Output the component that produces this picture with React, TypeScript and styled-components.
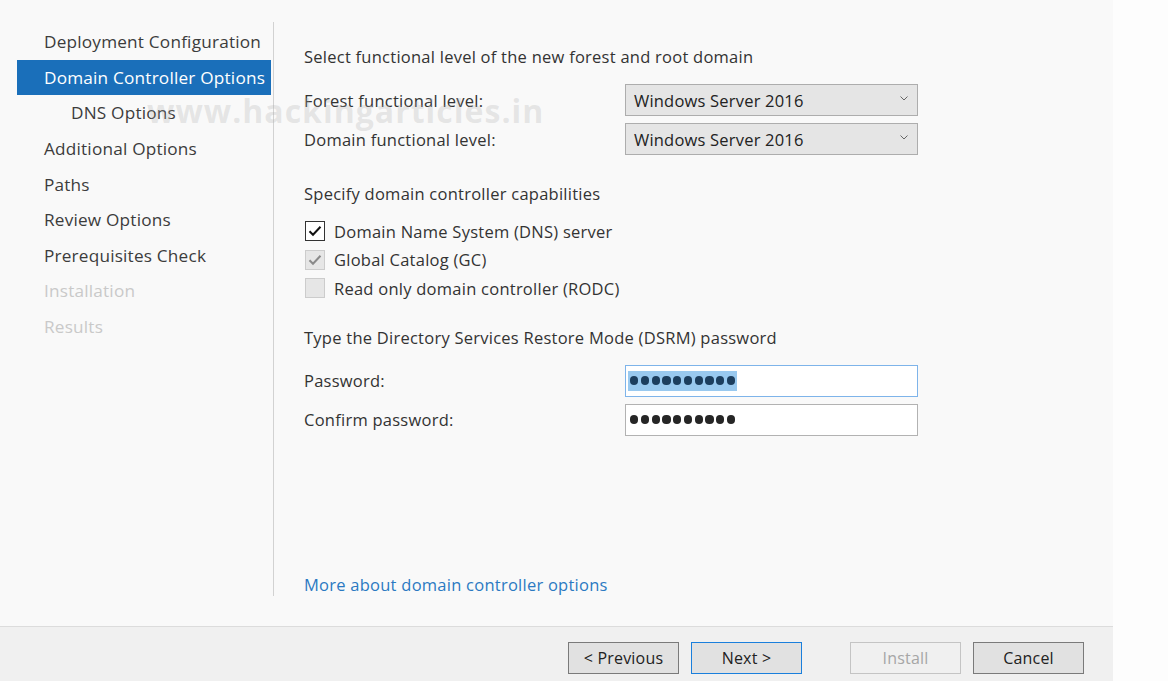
import React from "react";
import styled, { createGlobalStyle } from "styled-components";

const Global = createGlobalStyle`
  html, body { margin: 0; padding: 0; background: #fdfdfd; }
  body { font-family: "Open Sans", "Noto Sans", "Liberation Sans", sans-serif; }
  * { box-sizing: border-box; }
`;

const Page = styled.div`
  position: relative;
  display: flex;
  width: 1168px;
  height: 681px;
  overflow: hidden;
  background: #fdfdfd;
`;

const Window = styled.div`
  width: 1113px;
  height: 681px;
  display: flex;
  flex-direction: column;
  background: #f9f9f9;
`;

const Body = styled.div`
  flex: 1;
  display: flex;
  min-height: 0;
`;

const Sidebar = styled.nav`
  width: 274px;
  margin-top: 22px;
  height: 574px;
  padding-top: 2px;
  border-right: 1px solid #d2d2d2;
  display: flex;
  flex-direction: column;
`;

const NavItem = styled.div<{ $selected?: boolean; $disabled?: boolean; $indent?: boolean }>`
  height: 35.6px;
  margin-left: 17px;
  margin-right: 2px;
  padding-left: ${(p) => (p.$indent ? 54 : 27)}px;
  display: flex;
  align-items: center;
  font-size: 17.2px;
  letter-spacing: 0.2px;
  white-space: nowrap;
  background: ${(p) => (p.$selected ? "#1a6fba" : "transparent")};
  color: ${(p) => (p.$selected ? "#ffffff" : p.$disabled ? "#c9c9c9" : "#3c3c3c")};
`;

const Content = styled.main`
  flex: 1;
  display: flex;
  flex-direction: column;
  padding: 45px 0 29px 30px;
  color: #333333;
  font-size: 16.5px;
  letter-spacing: 0.25px;
`;

const Heading = styled.div<{ $top?: number }>`
  height: 24px;
  line-height: 24px;
  margin-top: ${(p) => p.$top ?? 0}px;
  white-space: nowrap;
`;

const FieldRow = styled.div<{ $top: number; $h: number }>`
  display: grid;
  grid-template-columns: 321px 293px;
  align-items: center;
  height: ${(p) => p.$h}px;
  margin-top: ${(p) => p.$top}px;
`;

const Label = styled.span`
  white-space: nowrap;
`;

const Select = styled.div`
  height: 32px;
  border: 1px solid #adadad;
  background: #e5e5e5;
  display: flex;
  align-items: center;
  justify-content: space-between;
  padding: 0 9px 0 8px;
  font-size: 16.5px;
  letter-spacing: 0.2px;
  color: #222;
`;

const Chevron = styled.svg`
  width: 8px;
  height: 5px;
  margin-top: -3px;
`;

const CheckRow = styled.div`
  height: 28.5px;
  display: flex;
  align-items: center;
  gap: 9px;
  padding-left: 1px;
  white-space: nowrap;
  color: #333;
`;

const Box = styled.span<{ $variant: "on" | "grey" | "off" }>`
  width: 20px;
  height: 20px;
  display: inline-flex;
  align-items: center;
  justify-content: center;
  border: 1px solid ${(p) => (p.$variant === "on" ? "#333333" : "#cccccc")};
  background: ${(p) => (p.$variant === "on" ? "#ffffff" : "#e6e6e6")};
`;

const Input = styled.div<{ $focus?: boolean }>`
  height: 32px;
  border: 1px solid ${(p) => (p.$focus ? "#7eb4ea" : "#b2b2b2")};
  background: #ffffff;
  display: flex;
  align-items: center;
  padding-left: 2px;
`;

const Dots = styled.span<{ $selected?: boolean }>`
  display: inline-flex;
  align-items: center;
  gap: 2.6px;
  height: 20px;
  padding: 0 2px;
  background: ${(p) => (p.$selected ? "#99c9ef" : "transparent")};
`;

const Dot = styled.span<{ $selected?: boolean }>`
  width: 8.2px;
  height: 8.2px;
  border-radius: 50%;
  background: ${(p) => (p.$selected ? "#1c3e5e" : "#262626")};
`;

const Link = styled.a`
  margin-top: auto;
  height: 24px;
  line-height: 24px;
  color: #2b79c2;
  text-decoration: none;
  white-space: nowrap;
`;

const Footer = styled.footer`
  height: 55px;
  border-top: 1px solid #dcdcdc;
  background: #f0f0f0;
  display: flex;
  justify-content: flex-end;
  align-items: flex-start;
  padding: 15px 29px 0 0;
`;

const Button = styled.div<{ $variant?: "default" | "primary" | "disabled"; $gap?: number }>`
  width: 111px;
  height: 32px;
  margin-left: ${(p) => p.$gap ?? 0}px;
  display: flex;
  align-items: center;
  justify-content: center;
  font-size: 16px;
  letter-spacing: 0.2px;
  background: ${(p) => (p.$variant === "disabled" ? "#f0f0f0" : "#e1e1e1")};
  border: 1px solid
    ${(p) => (p.$variant === "primary" ? "#1a7fdc" : p.$variant === "disabled" ? "#c4c4c4" : "#7a7a7a")};
  color: ${(p) => (p.$variant === "disabled" ? "#a6a6a6" : "#222")};
`;

const Watermark = styled.div`
  position: absolute;
  left: 147px;
  top: 89px;
  font-family: "Open Sans", "Noto Sans", sans-serif;
  font-weight: 700;
  font-size: 32px;
  letter-spacing: 1px;
  color: rgba(170, 170, 170, 0.26);
  pointer-events: none;
  white-space: nowrap;
`;

const Check = ({ color }: { color: string }) => (
  <svg width="14" height="12" viewBox="0 0 14 12">
    <path d="M1.5 6.2 L5 9.8 L12.5 1.8" fill="none" stroke={color} strokeWidth="2" />
  </svg>
);

const navItems: { label: string; selected?: boolean; disabled?: boolean; indent?: boolean }[] = [
  { label: "Deployment Configuration" },
  { label: "Domain Controller Options", selected: true },
  { label: "DNS Options", indent: true },
  { label: "Additional Options" },
  { label: "Paths" },
  { label: "Review Options" },
  { label: "Prerequisites Check" },
  { label: "Installation", disabled: true },
  { label: "Results", disabled: true },
];

const DotsField = ({ selected }: { selected?: boolean }) => (
  <Dots $selected={selected}>
    {Array.from({ length: 10 }).map((_, i) => (
      <Dot key={i} $selected={selected} />
    ))}
  </Dots>
);

const SelectBox = ({ value }: { value: string }) => (
  <Select>
    <span>{value}</span>
    <Chevron viewBox="0 0 8 5">
      <path d="M0.5 0.5 L4 4 L7.5 0.5" fill="none" stroke="#666" strokeWidth="1" />
    </Chevron>
  </Select>
);

export default function App() {
  return (
    <>
      <Global />
      <Page>
        <Window>
          <Body>
            <Sidebar>
              {navItems.map((n) => (
                <NavItem key={n.label} $selected={n.selected} $disabled={n.disabled} $indent={n.indent}>
                  {n.label}
                </NavItem>
              ))}
            </Sidebar>
            <Content>
              <Heading>Select functional level of the new forest and root domain</Heading>
              <FieldRow $top={15} $h={32}>
                <Label>Forest functional level:</Label>
                <SelectBox value="Windows Server 2016" />
              </FieldRow>
              <FieldRow $top={7} $h={32}>
                <Label>Domain functional level:</Label>
                <SelectBox value="Windows Server 2016" />
              </FieldRow>
              <Heading $top={27}>Specify domain controller capabilities</Heading>
              <div style={{ marginTop: 11 }}>
                <CheckRow>
                  <Box $variant="on">
                    <Check color="#111" />
                  </Box>
                  Domain Name System (DNS) server
                </CheckRow>
                <CheckRow>
                  <Box $variant="grey">
                    <Check color="#8a8a8a" />
                  </Box>
                  Global Catalog (GC)
                </CheckRow>
                <CheckRow>
                  <Box $variant="off" />
                  Read only domain controller (RODC)
                </CheckRow>
              </div>
              <Heading $top={23}>Type the Directory Services Restore Mode (DSRM) password</Heading>
              <FieldRow $top={15} $h={32}>
                <Label>Password:</Label>
                <Input $focus>
                  <DotsField selected />
                </Input>
              </FieldRow>
              <FieldRow $top={7} $h={32}>
                <Label>Confirm password:</Label>
                <Input>
                  <DotsField />
                </Input>
              </FieldRow>
              <Link>More about domain controller options</Link>
            </Content>
          </Body>
          <Footer>
            <Button>&lt; Previous</Button>
            <Button $variant="primary" $gap={12}>
              Next &gt;
            </Button>
            <Button $variant="disabled" $gap={48}>
              Install
            </Button>
            <Button $gap={12}>Cancel</Button>
          </Footer>
        </Window>
        <Watermark>www.hackingarticles.in</Watermark>
      </Page>
    </>
  );
}
